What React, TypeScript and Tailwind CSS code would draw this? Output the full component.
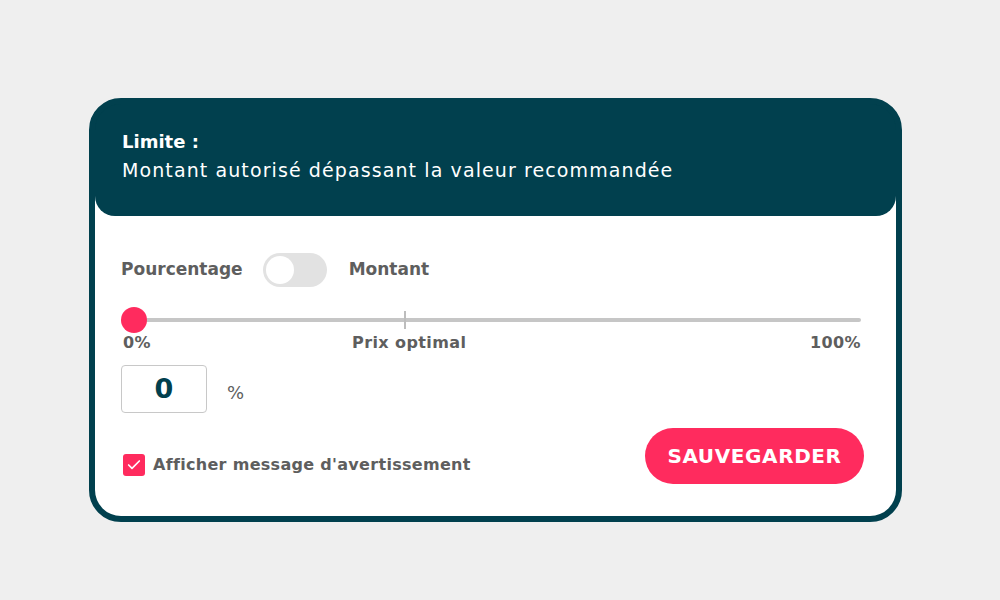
import { Check } from 'lucide-react'

const font = { fontFamily: '"DejaVu Sans", "Noto Sans", sans-serif' }

export default function App() {
  return (
    <div className="w-[1000px] h-[600px] bg-[#efefef] pt-[98px] pl-[89px]" style={font}>
      <div className="w-[813px] h-[424px] border-[6px] border-[#01404e] rounded-[32px] bg-[#01404e] flex flex-col">
        {/* header */}
        <div className="relative z-10 h-[112px] shrink-0 bg-[#01404e] rounded-t-[26px] rounded-b-[20px] pt-[25px] pl-[27px] text-white">
          <div className="text-[18px] font-bold leading-[26px]">Limite :</div>
          <div className="text-[19px] font-normal leading-[30px] tracking-[1.1px]">Montant autorisé dépassant la valeur recommandée</div>
        </div>

        <div className="flex-1 -mt-[20px] bg-white rounded-b-[26px] pl-[26px] pr-[35px] pt-[57px] flex flex-col">
          <div className="flex items-center h-[34px] text-[17px] font-bold text-[#5e5e5e]">
            <span>Pourcentage</span>
            <div className="ml-[20px] w-[64px] h-[34px] rounded-full bg-[#e2e2e2] p-[3px]">
              <div className="w-[28px] h-[28px] rounded-full bg-white" />
            </div>
            <span className="ml-[22px]">Montant</span>
          </div>

          <div className="relative mt-[20px] h-[26px] flex items-center">
            <div className="w-full h-[4px] rounded-full bg-[#c6c6c6]" />
            <div className="absolute left-[283px] top-[4px] w-[2px] h-[18px] bg-[#bdbdbd]" />
            <div className="absolute left-0 top-0 w-[26px] h-[26px] rounded-full bg-[#ff2b5e]" />
          </div>
          <div className="relative h-[20px] mt-0 text-[16px] font-bold text-[#5e5e5e] leading-[20px] tracking-[0.4px]">
            <span className="absolute left-[2px]">0%</span>
            <span className="absolute left-[231px]">Prix optimal</span>
            <span className="absolute right-0">100%</span>
          </div>

          <div className="flex items-center mt-[12px]">
            <div className="w-[86px] h-[48px] border-[1.5px] border-[#c8c8c8] rounded-[4px] flex items-center justify-center text-[27px] font-bold text-[#01404e]">
              0
            </div>
            <span className="ml-[20px] mt-[6px] text-[18px] text-[#5e5e5e]">%</span>
          </div>

          <div className="flex items-center justify-between mt-[15px]">
            <div className="flex items-center mt-[18px]">
              <div className="w-[22px] h-[22px] ml-[2px] rounded-[3px] bg-[#ff2b5e] flex items-center justify-center">
                <Check className="w-[16px] h-[16px] text-white" strokeWidth={2.5} />
              </div>
              <span className="ml-[8px] text-[16px] font-bold text-[#5e5e5e] tracking-[0.3px]">Afficher message d'avertissement</span>
            </div>
            <button className="w-[219px] h-[56px] -mr-[3px] rounded-full bg-[#ff2b5e] text-white text-[20px] font-bold tracking-[0.6px]" style={font}>
              SAUVEGARDER
            </button>
          </div>
        </div>
      </div>
    </div>
  )
}
